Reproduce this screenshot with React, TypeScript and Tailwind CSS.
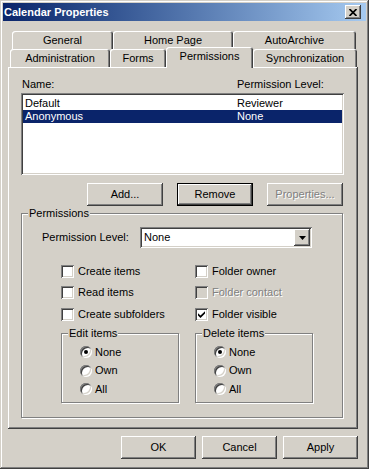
import React from "react";
import clsx from "clsx";

// Classic 3D bevels
const RAISED = "shadow-[inset_-1px_-1px_#404040,inset_1px_1px_#ffffff,inset_-2px_-2px_#808080]";
const SUNKEN = "shadow-[inset_1px_1px_#808080,inset_-1px_-1px_#ffffff,inset_2px_2px_#404040,inset_-2px_-2px_#d4d0c8]";
const ETCHED = "border border-[#808080] shadow-[inset_1px_1px_#ffffff,1px_1px_#ffffff]";
const DISABLED_TEXT = "text-[#808080] [text-shadow:1px_1px_0_#ffffff]";

const MEMBERS = [
  { name: "Default", level: "Reviewer", selected: false },
  { name: "Anonymous", level: "None", selected: true },
];

function Tab({ label, className, selected }: { label: string; className: string; selected?: boolean }) {
  return (
    <div
      className={clsx(
        "flex shrink-0 items-center justify-center rounded-t-[3px] bg-[#d4d0c8] shadow-[inset_1px_1px_#ffffff,inset_-1px_0_#404040,inset_-2px_0_#808080]",
        selected ? "relative z-10 -mb-px h-[21px] pb-[2px]" : "h-[18px]",
        className
      )}
    >
      {label}
    </div>
  );
}

function PushButton({ label, className, isDefault, disabled }: { label: string; className: string; isDefault?: boolean; disabled?: boolean }) {
  return (
    <div
      className={clsx(
        "flex h-[23px] items-center justify-center bg-[#d4d0c8]",
        RAISED,
        isDefault && "border border-black",
        className
      )}
    >
      <span className={disabled ? DISABLED_TEXT : ""}>{label}</span>
    </div>
  );
}

function CheckBox({ label, checked, disabled }: { label: string; checked?: boolean; disabled?: boolean }) {
  return (
    <div className="flex items-center gap-[4px]">
      <div className={clsx("flex h-[13px] w-[13px] items-center justify-center", disabled ? "bg-[#d4d0c8]" : "bg-white", SUNKEN)}>
        {checked && (
          <svg width="7" height="7" viewBox="0 0 7 7">
            <path d="M0 2.2 L2.5 4.6 L7 0.2 V2.6 L2.5 7 L0 4.6 Z" fill="#000" />
          </svg>
        )}
      </div>
      <span className={disabled ? DISABLED_TEXT : ""}>{label}</span>
    </div>
  );
}

function Radio({ label, checked }: { label: string; checked?: boolean }) {
  return (
    <div className="flex items-center gap-[3px]">
      <div className="flex h-[12px] w-[12px] items-center justify-center rounded-full bg-white shadow-[inset_1px_1px_#808080,inset_-1px_-1px_#ffffff,inset_2px_2px_#404040,inset_-2px_-2px_#d4d0c8]">
        {checked && <div className="h-[4px] w-[4px] rounded-full bg-black" />}
      </div>
      <span>{label}</span>
    </div>
  );
}

function RadioGroup({ title }: { title: string }) {
  return (
    <div className={clsx("relative h-[70px] w-[118px] pl-[18px] pt-[9px]", ETCHED)}>
      <span className="absolute -top-[7px] left-[6px] bg-[#d4d0c8] px-[1px]">{title}</span>
      <div className="flex h-[18px] items-center">
        <Radio label="None" checked />
      </div>
      <div className="flex h-[19px] items-center">
        <Radio label="Own" />
      </div>
      <div className="flex h-[18px] items-center">
        <Radio label="All" />
      </div>
    </div>
  );
}

export default function App() {
  return (
    <div className="h-[469px] w-[369px] bg-[#d4d0c8] p-[3px] font-['Liberation_Sans',Arial,sans-serif] text-[11px] leading-[13px] text-black shadow-[inset_-1px_-1px_#404040,inset_1px_1px_#d4d0c8,inset_-2px_-2px_#808080,inset_2px_2px_#ffffff]">
      {/* Title bar */}
      <div className="flex h-[18px] items-center justify-between bg-linear-to-r from-[#0a246a] to-[#a6caf0] pl-[1px] pr-[5px]">
        <span className="font-bold text-white">Calendar Properties</span>
        <div className={clsx("flex h-[14px] w-[16px] items-center justify-center bg-[#d4d0c8]", RAISED)}>
          <svg width="8" height="7" viewBox="0 0 8 7">
            <path d="M0.5 0 L7.5 7 M7.5 0 L0.5 7" stroke="#000" strokeWidth="1.7" />
          </svg>
        </div>
      </div>

      {/* Tab control */}
      <div className="ml-[5px] mt-[10px] w-[350px]">
        <div className="flex h-[18px] pl-[4px]">
          <Tab label="General" className="w-[101px]" />
          <Tab label="Home Page" className="w-[120px]" />
          <Tab label="AutoArchive" className="w-[123px]" />
        </div>
        <div className="flex h-[18px] items-end pl-[2px]">
          <Tab label="Administration" className="w-[100px]" />
          <Tab label="Forms" className="w-[56px]" />
          <Tab label="Permissions" className="w-[87px]" selected />
          <Tab label="Synchronization" className="w-[104px]" />
        </div>

        <div className={clsx("h-[362px] pl-[13px] pr-[14px] pt-[11px]", RAISED)}>
          <div className="flex h-[13px]">
            <span className="w-[216px] pl-[1px]">Name:</span>
            <span>Permission Level:</span>
          </div>

          {/* Member list */}
          <div className={clsx("mt-[2px] h-[82px] bg-white px-[2px] pt-[4px]", SUNKEN)}>
            {MEMBERS.map((m) => (
              <div key={m.name} className={clsx("flex h-[13px]", m.selected && "bg-[#0a246a] text-white")}>
                <span className="w-[214px] pl-[2px]">{m.name}</span>
                <span>{m.level}</span>
              </div>
            ))}
          </div>

          <div className="mt-[8px] flex justify-end gap-[14px] pr-[1px]">
            <PushButton label="Add..." className="w-[76px]" />
            <PushButton label="Remove" className="w-[76px]" isDefault />
            <PushButton label="Properties..." className="w-[76px]" disabled />
          </div>

          {/* Permissions group */}
          <div className={clsx("relative mt-[7px] h-[205px] w-[322px] pl-[20px] pt-[13px]", ETCHED)}>
            <span className="absolute -top-[7px] left-[6px] bg-[#d4d0c8] px-[1px]">Permissions</span>

            <div className="flex h-[21px] items-center">
              <span className="w-[98px]">Permission Level:</span>
              <div className={clsx("flex h-[21px] w-[172px] items-center bg-white pl-[4px] pr-[2px]", SUNKEN)}>
                <span>None</span>
                <div className={clsx("ml-auto flex h-[17px] w-[16px] items-center justify-center bg-[#d4d0c8]", RAISED)}>
                  <svg width="7" height="4" viewBox="0 0 7 4">
                    <polygon points="0,0 7,0 3.5,4" fill="#000" />
                  </svg>
                </div>
              </div>
            </div>

            <div className="mt-[12px] grid grid-cols-[134px_1fr] pl-[19px]">
              <div className="flex h-[22px] items-center"><CheckBox label="Create items" /></div>
              <div className="flex h-[22px] items-center"><CheckBox label="Folder owner" /></div>
              <div className="flex h-[21px] items-center"><CheckBox label="Read items" /></div>
              <div className="flex h-[21px] items-center"><CheckBox label="Folder contact" disabled /></div>
              <div className="flex h-[22px] items-center"><CheckBox label="Create subfolders" /></div>
              <div className="flex h-[22px] items-center"><CheckBox label="Folder visible" checked /></div>
            </div>

            <div className="mt-[8px] flex gap-[16px] pl-[19px]">
              <RadioGroup title="Edit items" />
              <RadioGroup title="Delete items" />
            </div>
          </div>
        </div>
      </div>

      {/* Dialog buttons */}
      <div className="ml-[5px] mt-[7px] flex w-[350px] justify-end gap-[6px]">
        <PushButton label="OK" className="w-[75px]" />
        <PushButton label="Cancel" className="w-[75px]" />
        <PushButton label="Apply" className="w-[75px]" />
      </div>
    </div>
  );
}
